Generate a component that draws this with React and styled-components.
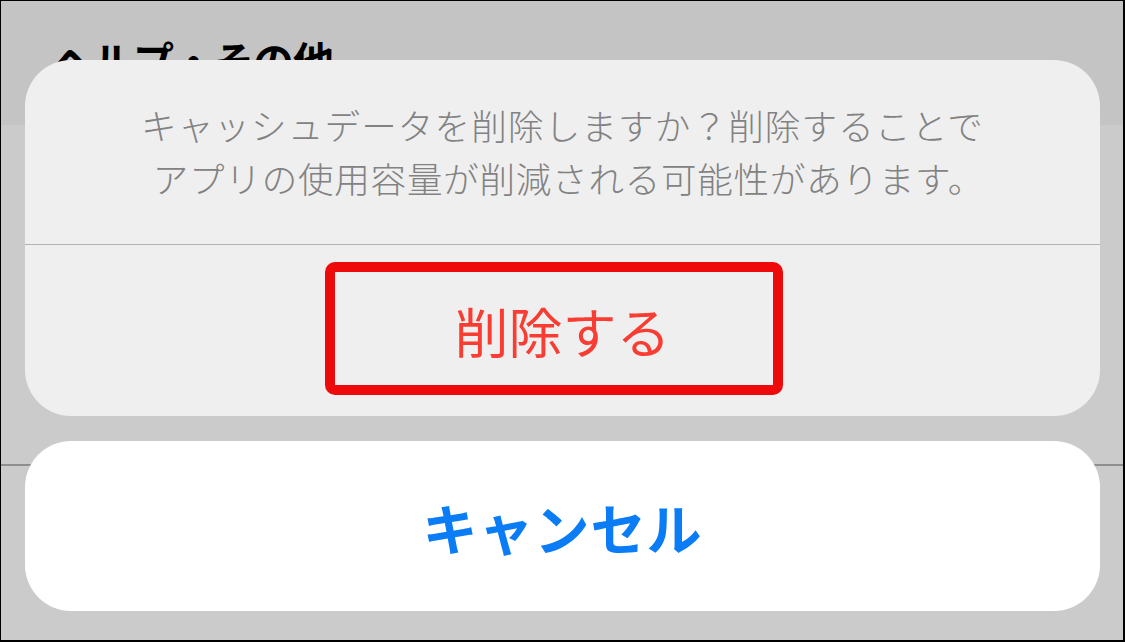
import React from 'react';
import styled, { createGlobalStyle } from 'styled-components';

const GlobalStyle = createGlobalStyle`
  html, body {
    margin: 0;
    padding: 0;
    background: #000;
  }
  body {
    font-family: "Noto Sans CJK JP", "Noto Sans", sans-serif;
  }
`;

const Screen = styled.div`
  position: relative;
  width: 1125px;
  height: 642px;
  box-sizing: border-box;
  border: 1px solid #000;
  border-width: 1px 2px 2px 1px;
  overflow: hidden;
  background: #cbcbcb;
`;

const Page = styled.div`
  display: flex;
  flex-direction: column;
  height: 100%;
`;

const NavArea = styled.div`
  height: 124px;
  background: #c4c4c4;
  padding: 34px 0 0 52px;
  box-sizing: border-box;
`;

const Title = styled.h1`
  margin: 0;
  font-size: 41px;
  font-weight: 700;
  color: #000;
  line-height: 1.2;
  letter-spacing: -1px;
`;

const Row = styled.div`
  height: ${p => p.height}px;
  border-bottom: 2px solid #8f8f8f;
`;

const Overlay = styled.div`
  position: absolute;
  inset: 59px 23px 29px 24px;
  display: flex;
  flex-direction: column;
  gap: 25px;
`;

const Group = styled.div`
  position: relative;
  flex-shrink: 0;
  background: ${p => p.bg};
  border-radius: 46px;
  overflow: hidden;
  display: flex;
  flex-direction: column;
`;

const Message = styled.div`
  height: 185px;
  box-sizing: border-box;
  padding-top: 38px;
  display: flex;
  flex-direction: column;
  align-items: center;
  color: #828282;
  font-size: 35.5px;
  font-weight: 300;
  line-height: 53px;
  border-bottom: 1px solid #b2b2b2;
`;

const Line = styled.span`
  letter-spacing: ${p => p.spacing}px;
  padding-left: ${p => p.shift || 0}px;
`;

const Action = styled.div`
  height: ${p => p.height}px;
  display: flex;
  align-items: center;
  justify-content: center;
  color: ${p => p.color};
  font-size: ${p => p.size}px;
  font-weight: ${p => p.weight};
  letter-spacing: ${p => p.spacing || 0}px;
`;

const Highlight = styled.div`
  position: absolute;
  left: 300px;
  top: 202px;
  width: 458px;
  height: 133px;
  box-sizing: border-box;
  border: 10px solid #ee0a0a;
  border-radius: 10px;
`;

export default function App() {
  return (
    <>
      <GlobalStyle />
      <Screen>
        <Page>
          <NavArea>
            <Title>ヘルプ・その他</Title>
          </NavArea>
          <Row height={339} />
        </Page>
        <Overlay>
          <Group bg="#efefef">
            <Message>
              <Line spacing={1.2}>キャッシュデータを削除しますか？削除することで</Line>
              <Line spacing={0.8} shift={12}>アプリの使用容量が削減される可能性があります。</Line>
            </Message>
            <Action height={171} color="#fa3d33" size={54} weight={400}>
              削除する
            </Action>
            <Highlight />
          </Group>
          <Group bg="#ffffff">
            <Action height={170} color="#0a7cf6" size={55} weight={700} spacing={1}>
              キャンセル
            </Action>
          </Group>
        </Overlay>
      </Screen>
    </>
  );
}
